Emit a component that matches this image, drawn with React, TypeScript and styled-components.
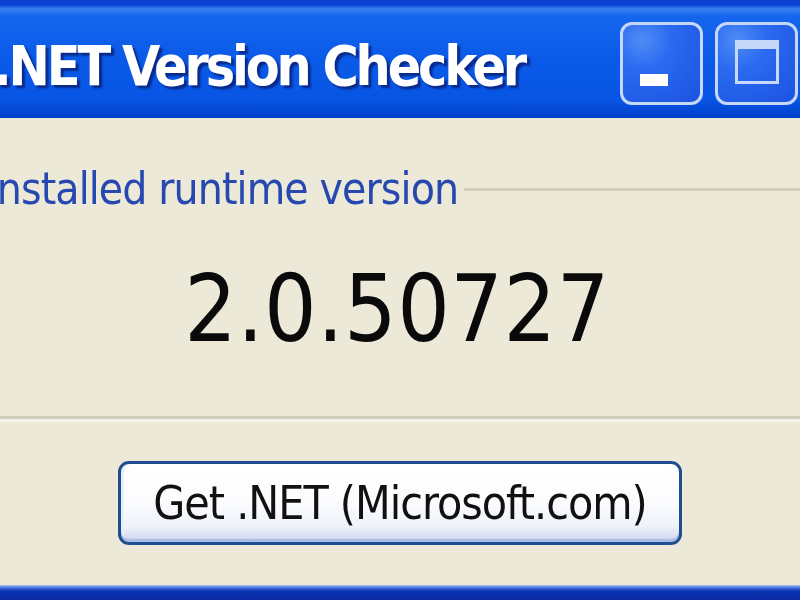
import styled, { createGlobalStyle } from "styled-components";

const GlobalStyle = createGlobalStyle`
  html, body {
    margin: 0;
    padding: 0;
    overflow: hidden;
    background: #ece9d8;
  }
`;

const Window = styled.div`
  width: 800px;
  height: 600px;
  display: flex;
  flex-direction: column;
  overflow: hidden;
  background: #ece9d8;
  font-family: "DejaVu Sans Condensed", "DejaVu Sans", sans-serif;
  font-stretch: condensed;
  filter: blur(0.6px);
`;

const TitleBar = styled.div`
  height: 118px;
  flex: none;
  display: flex;
  align-items: center;
  justify-content: space-between;
  box-sizing: border-box;
  background: linear-gradient(
    to bottom,
    #0a3fcc 0px,
    #0a44d6 5px,
    #3a82f4 9px,
    #1665ee 16px,
    #0a5ae8 60px,
    #0855e4 100px,
    #0346d4 112px,
    #0040c8 118px
  );
`;

const Title = styled.div`
  margin-left: -7px;
  margin-top: 14px;
  color: #fff;
  font-weight: bold;
  font-size: 55px;
  letter-spacing: -3.2px;
  white-space: nowrap;
  text-shadow: 3px 3px 2px #0a2a8a;
`;

const Controls = styled.div`
  display: flex;
  gap: 12px;
  margin-right: 2px;
  margin-top: 8px;
`;

const CaptionButton = styled.div`
  width: 83px;
  height: 83px;
  box-sizing: border-box;
  border: 3px solid #c6d8fa;
  border-radius: 12px;
  background: radial-gradient(
    circle at 25% 20%,
    #4f8cf6 0%,
    #2a6af0 35%,
    #1b52e0 100%
  );
  display: flex;
  align-items: center;
  justify-content: center;
  position: relative;
`;

const MinGlyph = styled.div`
  position: absolute;
  left: 17px;
  top: 49px;
  width: 28px;
  height: 12px;
  background: #fff;
`;

const MaxGlyph = styled.div`
  width: 44px;
  height: 44px;
  box-sizing: border-box;
  border: 3px solid #c8d8fa;
  border-top-width: 9px;
  margin-top: -2px;
`;

const Body = styled.div`
  flex: 1;
  display: flex;
  flex-direction: column;
  align-items: center;
  padding-top: 48px;
`;

const GroupBox = styled.fieldset`
  align-self: stretch;
  margin: 0 -40px 0 -30px;
  padding: 0;
  height: 253px;
  box-sizing: border-box;
  border: none;
  border-top: 3px solid #d2cfbc;
  border-bottom: 3px solid #d0cdba;
  box-shadow: 0 3px 0 #f6f4ea;
  display: flex;
  flex-direction: column;
  align-items: center;
`;

const Legend = styled.legend`
  margin-left: 16px;
  padding: 0 6px 0 0;
  color: #2648b0;
  font-size: 44px;
  line-height: 46px;
  letter-spacing: -0.9px;
`;

const Version = styled.div`
  margin-top: 52px;
  padding-right: 16px;
  font-size: 92px;
  line-height: 1;
  color: #0a0a0a;
  letter-spacing: 0.5px;
`;

const Button = styled.button`
  margin-top: 42px;
  width: 564px;
  height: 84px;
  box-sizing: border-box;
  border: 3px solid #1f4d8e;
  border-radius: 11px;
  background: linear-gradient(
    to bottom,
    #ffffff 0%,
    #fbfcfe 50%,
    #eef2fb 80%,
    #d5def2 94%,
    #b9c8ea 100%
  );
  box-shadow: inset 0 -3px 0 #a9bde6, inset 3px 0 0 #e7edf9;
  font-family: inherit;
  font-stretch: condensed;
  font-size: 46px;
  letter-spacing: -1px;
  color: #111;
  padding: 0;
  cursor: pointer;
`;

const BottomFrame = styled.div`
  height: 15px;
  flex: none;
  background: linear-gradient(
    to bottom,
    #a9c2f4 0px,
    #3d6de0 3px,
    #0c34b2 6px,
    #0a2aa2 15px
  );
`;

export default function App() {
  return (
    <>
      <GlobalStyle />
      <Window>
        <TitleBar>
          <Title>.NET Version Checker</Title>
          <Controls>
            <CaptionButton>
              <MinGlyph />
            </CaptionButton>
            <CaptionButton>
              <MaxGlyph />
            </CaptionButton>
          </Controls>
        </TitleBar>
        <Body>
          <GroupBox>
            <Legend>Installed runtime version</Legend>
            <Version>2.0.50727</Version>
          </GroupBox>
          <Button>Get .NET (Microsoft.com)</Button>
        </Body>
        <BottomFrame />
      </Window>
    </>
  );
}
